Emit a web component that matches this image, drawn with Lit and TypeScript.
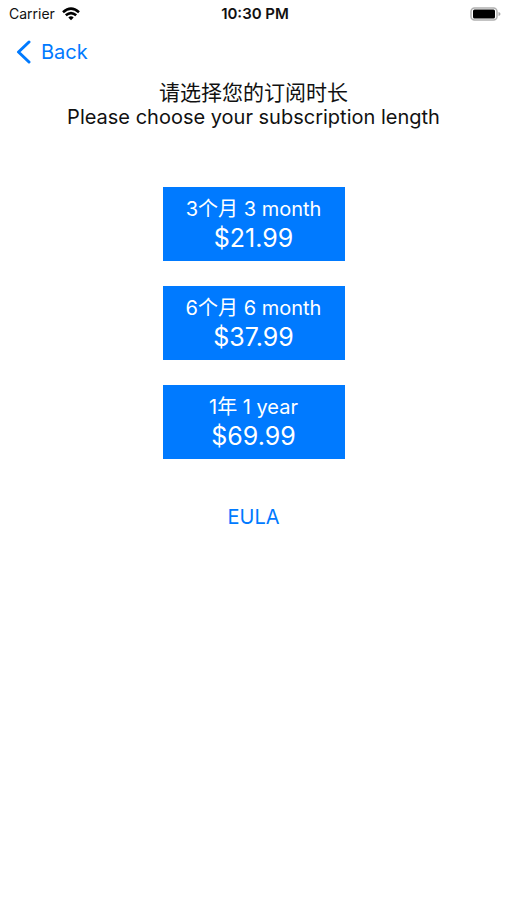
import { LitElement, html, css } from "lit";
import { customElement, property } from "lit/decorators.js";

interface Plan {
  length: string;
  price: string;
}

const plans: Plan[] = [
  { length: "3个月 3 month", price: "$21.99" },
  { length: "6个月 6 month", price: "$37.99" },
  { length: "1年 1 year", price: "$69.99" },
];

@customElement("status-bar")
export class StatusBar extends LitElement {
  static styles = css`
    :host {
      display: grid;
      grid-template-columns: 1fr auto 1fr;
      align-items: center;
      height: 28px;
      padding: 0 6px 0 9px;
      font-size: 14px;
      line-height: 16px;
      color: #111;
    }
    .carrier {
      display: flex;
      align-items: center;
      gap: 7px;
    }
    .time {
      font-size: 15px;
      font-weight: 600;
    }
    .battery {
      justify-self: end;
    }
    svg {
      display: block;
    }
  `;

  render() {
    return html`
      <div class="carrier">
        <span>Carrier</span>
        <svg width="18" height="14" viewBox="0 0 18 14" fill="none" stroke="#000" stroke-width="2.6" aria-hidden="true">
          <path d="M1 5.2Q9 -1.8 17 5.2" />
          <path d="M3.8 8.3Q9 3.8 14.2 8.3" />
          <path d="M6.3 10.4Q9 8.1 11.7 10.4L9 13.2Z" fill="#000" stroke="none" />
        </svg>
      </div>
      <div class="time">10:30 PM</div>
      <svg class="battery" width="31" height="14" viewBox="0 0 31 14" aria-hidden="true">
        <rect x="1" y="1" width="26" height="12" rx="3.5" fill="#fff" stroke="#b0b0b0" stroke-width="1.5" />
        <rect x="3" y="2.600" width="22" height="8.800" rx="1.5" fill="#000" />
        <path d="M28.5 5Q30.5 5.6 30.5 7T28.5 9Z" fill="#a8a8a8" />
      </svg>
    `;
  }
}

@customElement("plan-button")
export class PlanButton extends LitElement {
  @property({ attribute: false }) plan!: Plan;

  static styles = css`
    :host {
      display: block;
    }
    .plan {
      display: block;
      width: 100%;
      margin: 0;
      padding: 9px 0 8px;
      border: 0;
      border-radius: 0;
      background: #007aff;
      color: #fff;
      font: inherit;
      text-align: center;
      cursor: pointer;
    }
    .length,
    .price {
      display: block;
    }
    .length {
      font-size: 20px;
      line-height: 27px;
    }
    .price {
      font-size: 25px;
      line-height: 30px;
    }
  `;

  render() {
    return html`
      <button class="plan" type="button">
        <span class="length">${this.plan.length}</span>
        <span class="price">${this.plan.price}</span>
      </button>
    `;
  }
}

@customElement("app-root")
export class AppRoot extends LitElement {
  static styles = css`
    :host {
      display: block;
      min-height: 100vh;
      background: #fff;
      color: #111;
      font-family: Inter, "Noto Sans CJK SC", sans-serif;
      font-size: 20px;
      line-height: 25px;
    }
    .nav {
      display: flex;
      padding: 8px 16px 0;
    }
    .back {
      display: flex;
      align-items: center;
      gap: 10px;
      height: 32px;
      padding: 0;
      border: 0;
      background: none;
      color: #007aff;
      font: inherit;
      cursor: pointer;
    }
    .content {
      display: flex;
      flex-direction: column;
      align-items: center;
      padding: 12px 16px;
    }
    .title {
      margin: 0;
      font-size: 20px;
      font-weight: 400;
      line-height: 25px;
      text-align: center;
    }
    .line {
      display: block;
    }
    .line:lang(zh) {
      font-size: 21px;
    }
    .plans {
      display: grid;
      gap: 25px;
      width: 36%;
      min-width: 182px;
      margin: 57px 0 46px;
    }
    .eula {
      color: #007aff;
      text-decoration: none;
    }
  `;

  render() {
    return html`
      <status-bar></status-bar>
      <nav class="nav">
        <button class="back" type="button">
          <svg width="15" height="24" viewBox="0 0 15 24" fill="none" stroke="currentColor" stroke-width="3" stroke-linecap="round" stroke-linejoin="round" aria-hidden="true">
            <path d="M13 2L2.500 12L13 22" />
          </svg>
          <span>Back</span>
        </button>
      </nav>
      <main class="content">
        <h1 class="title">
          <span class="line" lang="zh">请选择您的订阅时长</span>
          <span class="line">Please choose your subscription length</span>
        </h1>
        <div class="plans">
          ${plans.map((plan) => html`<plan-button .plan=${plan}></plan-button>`)}
        </div>
        <a class="eula" href="#eula">EULA</a>
      </main>
    `;
  }
}
